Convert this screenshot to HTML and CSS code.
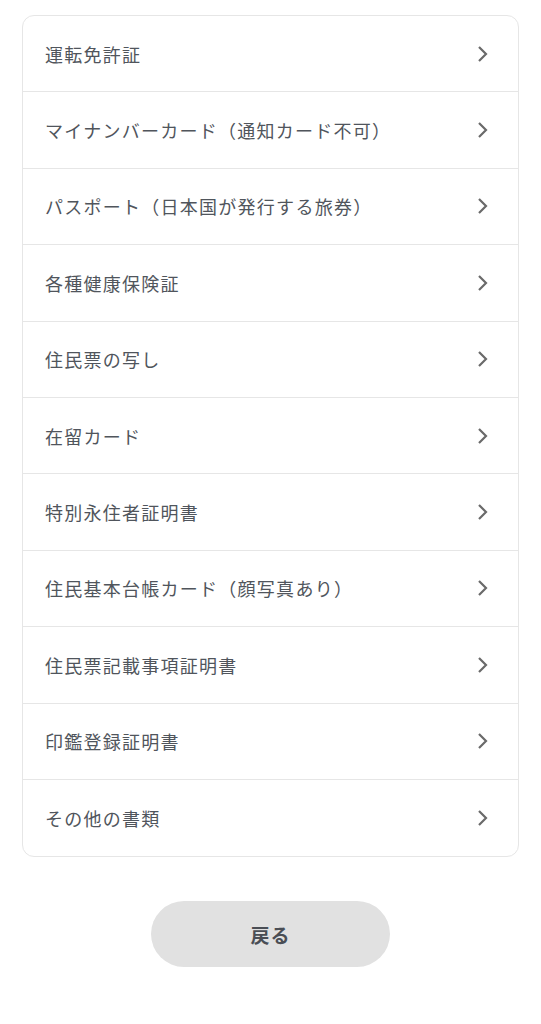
FILE: index.html
```html
<!DOCTYPE html>
<html lang="ja">
<head>
    <meta charset="UTF-8">
    <meta name="viewport" content="width=device-width, initial-scale=1.0">
    <title>本人確認書類の選択</title>
    <link rel="stylesheet" href="styles.css">
</head>
<body>
    <div class="container">
        <ul class="doc-list">
            <li class="doc-item"><span class="doc-name">運転免許証</span><svg class="chevron" viewBox="0 0 12 18"><path d="M2 2l7 7-7 7"/></svg></li>
            <li class="doc-item"><span class="doc-name">マイナンバーカード（通知カード不可）</span><svg class="chevron" viewBox="0 0 12 18"><path d="M2 2l7 7-7 7"/></svg></li>
            <li class="doc-item"><span class="doc-name">パスポート（日本国が発行する旅券）</span><svg class="chevron" viewBox="0 0 12 18"><path d="M2 2l7 7-7 7"/></svg></li>
            <li class="doc-item"><span class="doc-name">各種健康保険証</span><svg class="chevron" viewBox="0 0 12 18"><path d="M2 2l7 7-7 7"/></svg></li>
            <li class="doc-item"><span class="doc-name">住民票の写し</span><svg class="chevron" viewBox="0 0 12 18"><path d="M2 2l7 7-7 7"/></svg></li>
            <li class="doc-item"><span class="doc-name">在留カード</span><svg class="chevron" viewBox="0 0 12 18"><path d="M2 2l7 7-7 7"/></svg></li>
            <li class="doc-item"><span class="doc-name">特別永住者証明書</span><svg class="chevron" viewBox="0 0 12 18"><path d="M2 2l7 7-7 7"/></svg></li>
            <li class="doc-item"><span class="doc-name">住民基本台帳カード（顔写真あり）</span><svg class="chevron" viewBox="0 0 12 18"><path d="M2 2l7 7-7 7"/></svg></li>
            <li class="doc-item"><span class="doc-name">住民票記載事項証明書</span><svg class="chevron" viewBox="0 0 12 18"><path d="M2 2l7 7-7 7"/></svg></li>
            <li class="doc-item"><span class="doc-name">印鑑登録証明書</span><svg class="chevron" viewBox="0 0 12 18"><path d="M2 2l7 7-7 7"/></svg></li>
            <li class="doc-item"><span class="doc-name">その他の書類</span><svg class="chevron" viewBox="0 0 12 18"><path d="M2 2l7 7-7 7"/></svg></li>
        </ul>

        <div class="actions">
            <button class="btn-back">戻る</button>
        </div>
    </div>
</body>
</html>
```

FILE: styles.css
```css
:root {
    --text: #50555c;
    --border: #e6e6e6;
    --button: #e1e1e1;
}

* {
    margin: 0;
    padding: 0;
    box-sizing: border-box;
    font-family: 'Noto Sans CJK JP', 'Noto Sans', sans-serif;
}

body {
    background: #ffffff;
    color: var(--text);
}

.container {
    padding: 15px 22px 0;
}

.doc-list {
    list-style: none;
    border: 1px solid var(--border);
    border-radius: 12px;
}

.doc-item {
    height: 76.4px;
    display: flex;
    align-items: center;
    justify-content: space-between;
    padding: 0 29px 0 22px;
    border-bottom: 1px solid var(--border);
}

.doc-item:last-child {
    border-bottom: none;
}

.doc-name {
    font-size: 18px;
    letter-spacing: 0.07em;
    color: var(--text);
}

.chevron {
    width: 12px;
    height: 18px;
    fill: none;
    stroke: #6a6a6a;
    stroke-width: 2.2;
}

.actions {
    display: flex;
    justify-content: center;
    margin-top: 44px;
}

.btn-back {
    width: 239px;
    height: 66px;
    border: none;
    border-radius: 33px;
    background: var(--button);
    color: #4a4e55;
    font-size: 19px;
    font-weight: bold;
    letter-spacing: 0.05em;
    cursor: pointer;
}
```
